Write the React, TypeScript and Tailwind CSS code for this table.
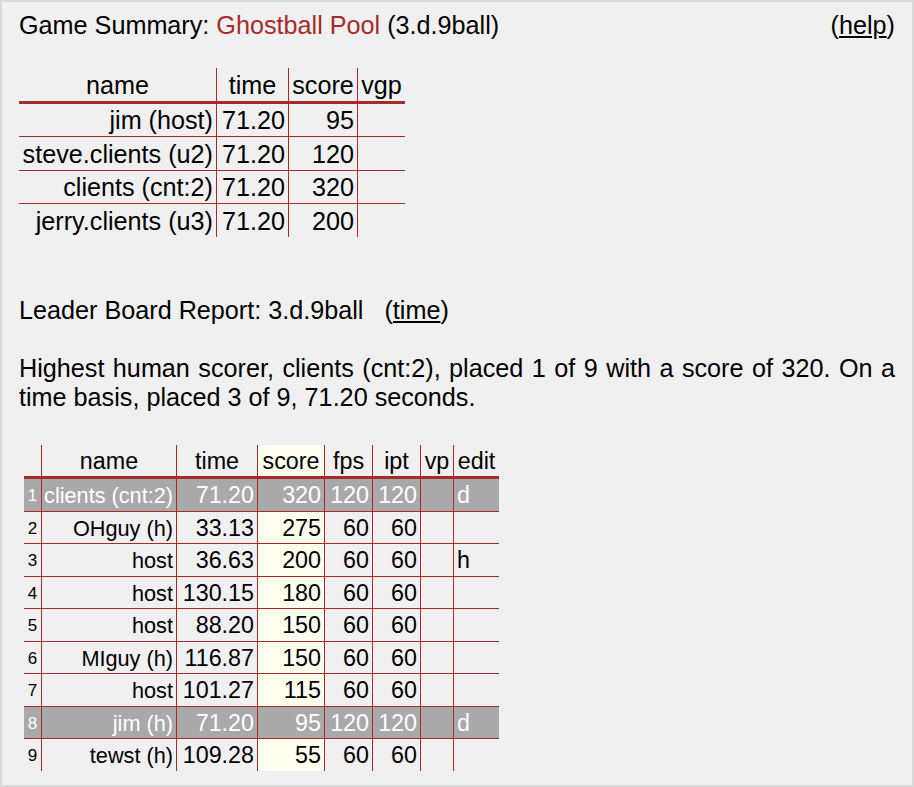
import React from "react";

const B = "border-[#a52a2a]";

type Row2 = {
  rank: string;
  name: string;
  time: string;
  score: string;
  fps: string;
  ipt: string;
  vp: string;
  edit: string;
  hl?: boolean;
};

const summaryRows = [
  ["jim (host)", "71.20", "95"],
  ["steve.clients (u2)", "71.20", "120"],
  ["clients (cnt:2)", "71.20", "320"],
  ["jerry.clients (u3)", "71.20", "200"],
];

const boardRows: Row2[] = [
  { rank: "1", name: "clients (cnt:2)", time: "71.20", score: "320", fps: "120", ipt: "120", vp: "", edit: "d", hl: true },
  { rank: "2", name: "OHguy (h)", time: "33.13", score: "275", fps: "60", ipt: "60", vp: "", edit: "" },
  { rank: "3", name: "host", time: "36.63", score: "200", fps: "60", ipt: "60", vp: "", edit: "h" },
  { rank: "4", name: "host", time: "130.15", score: "180", fps: "60", ipt: "60", vp: "", edit: "" },
  { rank: "5", name: "host", time: "88.20", score: "150", fps: "60", ipt: "60", vp: "", edit: "" },
  { rank: "6", name: "MIguy (h)", time: "116.87", score: "150", fps: "60", ipt: "60", vp: "", edit: "" },
  { rank: "7", name: "host", time: "101.27", score: "115", fps: "60", ipt: "60", vp: "", edit: "" },
  { rank: "8", name: "jim (h)", time: "71.20", score: "95", fps: "120", ipt: "120", vp: "", edit: "d", hl: true },
  { rank: "9", name: "tewst (h)", time: "109.28", score: "55", fps: "60", ipt: "60", vp: "", edit: "" },
];

function SummaryTable() {
  const head = ["name", "time", "score", "vgp"];
  return (
    <div className="mt-[28px] grid w-[386px] grid-cols-[197px_72px_69px_48px] text-[25.2px] leading-[29px]">
      {head.map((h, i) => (
        <div
          key={h}
          className={`flex h-[35.5px] items-center justify-center border-b-[3px] pt-[3px] ${B} ${i > 0 ? "border-l" : ""}`}
        >
          {h}
        </div>
      ))}
      {summaryRows.map((r, ri) => (
        <React.Fragment key={ri}>
          {[r[0], r[1], r[2], ""].map((c, ci) => (
            <div
              key={ci}
              className={`flex items-center justify-end pr-[3px] pt-[2px] whitespace-nowrap ${B} ${
                ri > 0 ? "h-[33.5px] border-t" : "h-[32.5px]"
              } ${ci > 0 ? "border-l" : ""}`}
            >
              {c}
            </div>
          ))}
        </React.Fragment>
      ))}
    </div>
  );
}

function BoardTable() {
  const head = ["", "name", "time", "score", "fps", "ipt", "vp", "edit"];
  return (
    <div className="ml-[5px] mt-[33px] grid w-[475px] grid-cols-[17px_135px_81px_67px_48px_48px_33px_46px] text-[23.3px] leading-[27px]">
      {head.map((h, i) => (
        <div
          key={i}
          className={`flex h-[34.5px] items-center justify-center border-b-[3px] pt-[3px] ${B} ${i > 0 ? "border-l" : ""} ${
            i === 3 ? "bg-[#fffff0]" : ""
          }`}
        >
          {h}
        </div>
      ))}
      {boardRows.map((r, ri) => {
        const rowH = ri > 0 ? "h-[32.5px] border-t" : "h-[31.5px]";
        const bg = r.hl ? "bg-[#a9a9a9] text-white" : "";
        const cells = [r.rank, r.name, r.time, r.score, r.fps, r.ipt, r.vp, r.edit];
        return (
          <React.Fragment key={ri}>
            {cells.map((c, ci) => {
              let cls = `flex items-center whitespace-nowrap pt-[2px] ${B} ${rowH} ${bg} ${ci > 0 ? "border-l" : ""}`;
              if (ci === 0) cls += " justify-center text-[17px]";
              else if (ci === 7) cls += " justify-start pl-[3px]";
              else cls += " justify-end pr-[3px]";
              if (ci === 1) cls += " text-[21.7px]";
              if (ci === 3 && !r.hl) cls += " bg-[#fffff0]";
              return (
                <div key={ci} className={cls}>
                  {c}
                </div>
              );
            })}
          </React.Fragment>
        );
      })}
    </div>
  );
}

export default function App() {
  return (
    <div
      className="h-[787px] w-[914px] border-2 border-[#dadada] bg-[#f0f0f0] px-[17px] pt-[9px] text-black"
      style={{ fontFamily: '"Liberation Sans", Arial, sans-serif' }}
    >
      <div className="flex justify-between text-[25.2px] leading-[29px]">
        <div>
          Game Summary: <span className="text-[#a52a2a]">Ghostball Pool</span> (3.d.9ball)
        </div>
        <div>
          (<span className="underline">help</span>)
        </div>
      </div>

      <SummaryTable />

      <div className="mt-[59px] whitespace-pre text-[25.2px] leading-[29px]">
        {"Leader Board Report: 3.d.9ball   ("}
        <span className="underline">time</span>
        {")"}
      </div>

      <p className="mt-[29px] text-justify text-[25.2px] leading-[29px]">
        Highest human scorer, clients (cnt:2), placed 1 of 9 with a score of 320. On a time basis, placed 3 of 9,
        71.20 seconds.
      </p>

      <BoardTable />
    </div>
  );
}
